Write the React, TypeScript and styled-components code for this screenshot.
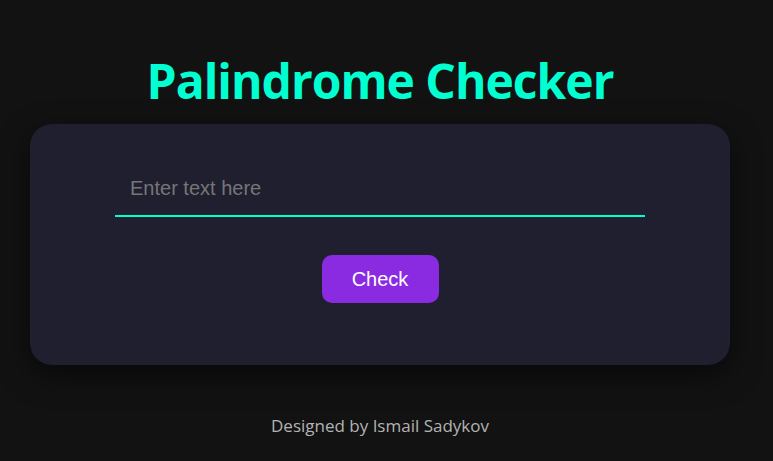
import React from "react";
import styled, { createGlobalStyle } from "styled-components";

const GlobalStyle = createGlobalStyle`
  html, body {
    margin: 0;
    padding: 0;
    background: #121212;
  }
  body {
    font-family: "Open Sans", "Noto Sans", sans-serif;
  }
`;

const Page = styled.div`
  width: 760px;
  height: 461px;
  display: flex;
  flex-direction: column;
  align-items: center;
  box-sizing: border-box;
  padding-top: 49px;
`;

const Title = styled.h1`
  margin: 0 0 11px;
  font-family: "Open Sans", "Noto Sans", sans-serif;
  font-weight: 700;
  font-size: 48px;
  line-height: 64px;
  color: #00ffd1;
  letter-spacing: -1px;
`;

const Card = styled.div`
  width: 700px;
  height: 241px;
  box-sizing: border-box;
  background: #1f1f2f;
  border-radius: 22px;
  box-shadow: 0 10px 30px rgba(0, 0, 0, 0.55);
  display: flex;
  flex-direction: column;
  align-items: center;
  padding-top: 38px;
`;

const Input = styled.input`
  width: 530px;
  height: 55px;
  box-sizing: border-box;
  background: transparent;
  border: none;
  border-bottom: 2px solid #00ffd1;
  outline: none;
  padding: 0 15px;
  font-family: "Liberation Sans", Arial, sans-serif;
  font-size: 20px;
  color: #ddd;
  &::placeholder {
    color: #767676;
  }
`;

const Button = styled.button`
  margin-top: 38px;
  width: 117px;
  height: 48px;
  border: none;
  border-radius: 10px;
  background: #8a2be2;
  color: #fff;
  font-family: "Liberation Sans", Arial, sans-serif;
  font-size: 20px;
  cursor: pointer;
`;

const Footer = styled.p`
  margin: 49px 0 0;
  font-family: "Open Sans", "Noto Sans", sans-serif;
  font-size: 17px;
  line-height: 24px;
  color: #b3b3b3;
`;

export default function App() {
  return (
    <>
      <GlobalStyle />
      <Page>
        <Title>Palindrome Checker</Title>
        <Card>
          <Input type="text" placeholder="Enter text here" />
          <Button>Check</Button>
        </Card>
        <Footer>Designed by Ismail Sadykov</Footer>
      </Page>
    </>
  );
}
